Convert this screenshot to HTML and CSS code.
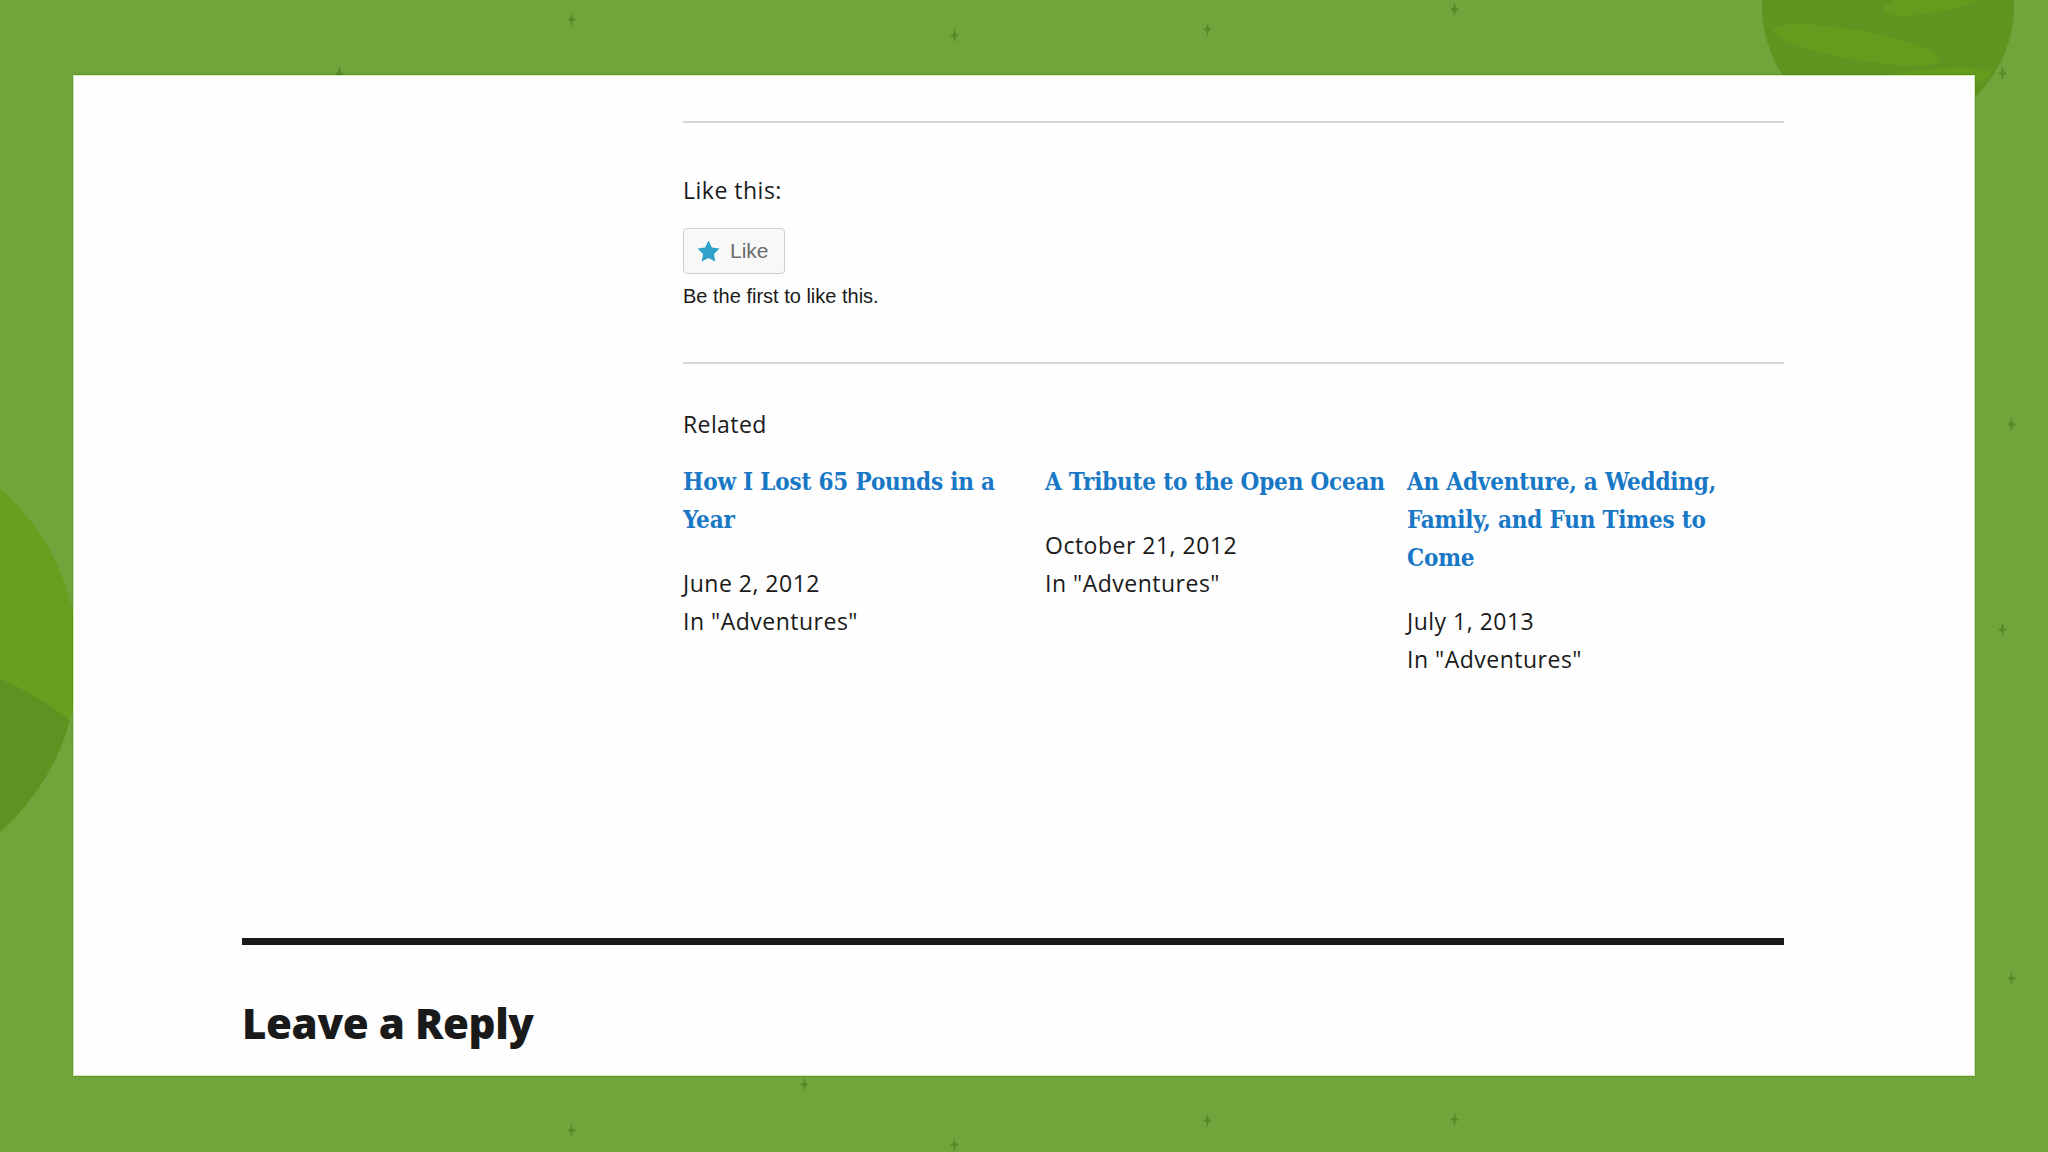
FILE: index.html
```html
<!DOCTYPE html>
<html lang="en">
<head>
<meta charset="utf-8">
<title>Leave a Reply</title>
<link rel="stylesheet" href="styles.css">
</head>
<body>
<div class="backdrop" aria-hidden="true">
  <div class="planet planet-left"><div class="band"></div></div>
  <div class="planet planet-right"><div class="stripe stripe-a"></div><div class="stripe stripe-b"></div><div class="stripe stripe-c"></div></div>
  <span class="spark" style="left:567px;top:12px"></span>
  <span class="spark" style="left:950px;top:28px"></span>
  <span class="spark" style="left:1203px;top:22px"></span>
  <span class="spark" style="left:1450px;top:2px"></span>
  <span class="spark" style="left:335px;top:66px"></span>
  <span class="spark" style="left:1998px;top:66px"></span>
  <span class="spark" style="left:2007px;top:417px"></span>
  <span class="spark" style="left:1998px;top:622px"></span>
  <span class="spark" style="left:2007px;top:971px"></span>
  <span class="spark" style="left:800px;top:1077px"></span>
  <span class="spark" style="left:567px;top:1123px"></span>
  <span class="spark" style="left:950px;top:1137px"></span>
  <span class="spark" style="left:1203px;top:1113px"></span>
  <span class="spark" style="left:1450px;top:1112px"></span>
</div>

<main class="card">
  <div class="entry-footer">
    <div class="sharing">
      <h3 class="like-heading">Like this:</h3>
      <button class="like-btn" type="button">
        <svg class="like-star" viewBox="0 0 24 23" width="23" height="22"><path d="M12 .6l3.5 7.3 8 1.1-5.8 5.6 1.4 7.9L12 18.7l-7.1 3.8 1.4-7.9L.5 9l8-1.1z"/></svg>
        <span>Like</span>
      </button>
      <p class="like-note">Be the first to like this.</p>
    </div>

    <div class="related">
      <h3 class="related-heading">Related</h3>
      <div class="related-grid">
        <article class="related-post">
          <h4 class="related-title"><a href="#">How I Lost 65 Pounds in a Year</a></h4>
          <p class="related-meta">June 2, 2012</p>
          <p class="related-meta">In "Adventures"</p>
        </article>
        <article class="related-post">
          <h4 class="related-title"><a href="#">A Tribute to the Open Ocean</a></h4>
          <p class="related-meta">October 21, 2012</p>
          <p class="related-meta">In "Adventures"</p>
        </article>
        <article class="related-post">
          <h4 class="related-title"><a href="#">An Adventure, a Wedding, Family, and Fun Times to Come</a></h4>
          <p class="related-meta">July 1, 2013</p>
          <p class="related-meta">In "Adventures"</p>
        </article>
      </div>
    </div>
  </div>

  <section class="comments">
    <h2 class="reply-title">Leave a Reply</h2>
  </section>
</main>
</body>
</html>
```

FILE: styles.css
```css
* { box-sizing: border-box; }

html, body {
  margin: 0;
  padding: 0;
}

body {
  width: 2048px;
  height: 1152px;
  overflow: hidden;
  position: relative;
  background: #70a53c;
  font-family: "Open Sans", "Noto Sans", sans-serif;
  color: #1a1a1a;
}

/* decorative backdrop */
.backdrop {
  position: absolute;
  inset: 0;
  z-index: 0;
  overflow: hidden;
}

.planet {
  position: absolute;
  border-radius: 50%;
  overflow: hidden;
}

.planet-left {
  left: -378px;
  top: 432px;
  width: 456px;
  height: 456px;
  background: #67a01e;
}

.planet-left .band {
  position: absolute;
  left: -80px;
  top: 215px;
  width: 600px;
  height: 420px;
  border-radius: 50%;
  background: #5f9321;
}

.planet-right {
  left: 1762px;
  top: -120px;
  width: 252px;
  height: 252px;
  background: #5f9420;
}

.planet-right .stripe {
  position: absolute;
  border-radius: 50%;
  background: #649c1e;
}

.stripe-a {
  left: 10px;
  top: 150px;
  width: 170px;
  height: 30px;
  transform: rotate(10deg);
}

.stripe-b {
  left: 120px;
  top: 105px;
  width: 120px;
  height: 26px;
  transform: rotate(-12deg);
}

.stripe-c {
  left: 60px;
  top: 192px;
  width: 170px;
  height: 26px;
  transform: rotate(-8deg);
}

.spark {
  position: absolute;
  width: 9px;
  height: 15px;
  background: #588a2a;
  clip-path: polygon(50% 0, 65% 38%, 100% 50%, 65% 62%, 50% 100%, 35% 62%, 0 50%, 35% 38%);
}

/* card */
.card {
  position: relative;
  z-index: 1;
  margin: 75px 73px 0;
  height: 1001px;
  background: #fefefe;
  box-shadow: inset 0 0 0 1px #d3ebb2, 0 0 2px rgba(40, 70, 10, 0.45);
  padding: 46px 191px 0 169px;
}

.entry-footer {
  margin-left: 441px;
}

.sharing {
  border-top: 2px solid #d6d6d6;
  border-bottom: 2px solid #d6d6d6;
  padding: 51px 0 54px;
}

.like-heading {
  margin: 0;
  font-size: 23px;
  line-height: 32px;
  font-weight: 400;
  letter-spacing: 0.5px;
  color: #1a1a1a;
}

.like-btn {
  margin-top: 22px;
  display: flex;
  align-items: center;
  gap: 10px;
  width: 102px;
  height: 46px;
  padding: 0 0 0 13px;
  border: 1px solid #cfcfcf;
  border-radius: 4px;
  background: #f8f8f8;
  font-family: "Liberation Sans", Arial, sans-serif;
  font-size: 21px;
  color: #6b6b6b;
}

.like-star {
  display: block;
  fill: #2ea2cc;
}

.like-note {
  margin: 10px 0 0;
  font-family: "Liberation Sans", Arial, sans-serif;
  font-size: 20px;
  line-height: 24px;
  color: #1a1a1a;
}

.related-heading {
  margin: 44px 0 0;
  font-size: 23px;
  line-height: 32px;
  font-weight: 400;
  letter-spacing: 0.4px;
}

.related-grid {
  margin-top: 23px;
  display: grid;
  grid-template-columns: repeat(3, 352px);
  column-gap: 10px;
  align-items: start;
}

.related-title {
  margin: 0 0 25px;
  font-family: "DejaVu Serif Condensed", "DejaVu Serif", serif;
  font-stretch: condensed;
  font-size: 24px;
  line-height: 38px;
  font-weight: 700;
  letter-spacing: -0.2px;
}

.related-title a {
  color: #1878c6;
  text-decoration: none;
}

.related-meta {
  margin: 0;
  font-size: 23px;
  line-height: 38px;
  letter-spacing: 0.5px;
  color: #1a1a1a;
}

.comments {
  margin-top: 260px;
  border-top: 7px solid #1a1a1a;
}

.reply-title {
  margin: 53px 0 0;
  font-size: 42px;
  line-height: 50px;
  font-weight: 800;
  letter-spacing: -0.4px;
  color: #1a1a1a;
}
```
